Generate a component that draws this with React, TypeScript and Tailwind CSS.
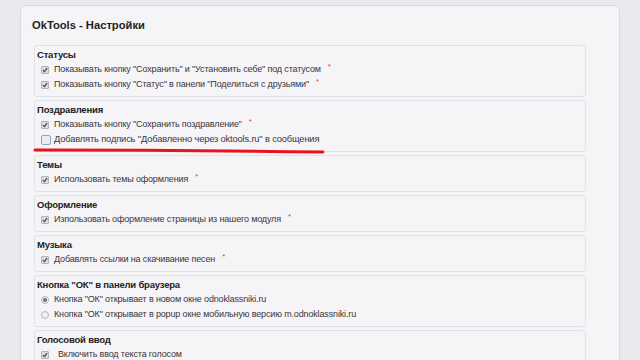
import React from "react";

type Item = { label: string; kind: "check" | "radio"; on: boolean; star?: boolean; big?: boolean; wide?: boolean };
type Section = { title: string; items: Item[] };

const sections: Section[] = [
  {
    title: "Статусы",
    items: [
      { label: 'Показывать кнопку "Сохранить" и "Установить себе" под статусом', kind: "check", on: true, star: true },
      { label: 'Показывать кнопку "Статус" в панели "Поделиться с друзьями"', kind: "check", on: true, star: true },
    ],
  },
  {
    title: "Поздравления",
    items: [
      { label: 'Показывать кнопку "Сохранить поздравление"', kind: "check", on: true, star: true },
      { label: 'Добавлять подпись "Добавленно через oktools.ru" в сообщения', kind: "check", on: false, big: true },
    ],
  },
  { title: "Темы", items: [{ label: "Использовать темы оформления", kind: "check", on: true, star: true }] },
  {
    title: "Оформление",
    items: [{ label: "Изпользовать оформление страницы из нашего модуля", kind: "check", on: true, star: true }],
  },
  { title: "Музыка", items: [{ label: "Добавлять ссылки на скачивание песен", kind: "check", on: true, star: true }] },
  {
    title: 'Кнопка "ОК" в панели браузера',
    items: [
      { label: 'Кнопка "ОК" открывает в новом окне odnoklassniki.ru', kind: "radio", on: true },
      { label: 'Кнопка "ОК" открывает в popup окне мобильную версию m.odnoklassniki.ru', kind: "radio", on: false },
    ],
  },
  { title: "Голосовой ввод", items: [{ label: "Включить ввод текста голосом", kind: "check", on: true, wide: true }] },
];

function Box({ it }: { it: Item }) {
  if (it.kind === "radio") {
    return (
      <span className="w-[8px] h-[8px] rounded-full border border-[#b8b8bc] bg-[#f0f0f2] flex items-center justify-center">
        {it.on ? <span className="w-[4px] h-[4px] rounded-full bg-[#707076]" /> : null}
      </span>
    );
  }
  if (!it.on) {
    return <span className="w-[10px] h-[10px] rounded-[2px] border border-[#8fa3c4] bg-[#e9edf4]" />;
  }
  return (
    <span className="w-[8px] h-[8px] rounded-[1px] border border-[#b4b4b8] bg-[#dcdce0] flex items-center justify-center">
      <svg width="6" height="6" viewBox="0 0 7 7">
        <path d="M1 3.6 L2.8 5.4 L6 1.2" stroke="#4a4a4e" strokeWidth="1.5" fill="none" />
      </svg>
    </span>
  );
}

export default function App() {
  return (
    <div
      className="relative w-[640px] h-[360px] overflow-hidden bg-[#e9e9ee] pt-[5px] pl-[20px]"
      style={{ fontFamily: '"Liberation Sans", Arial, sans-serif' }}
    >
      <div className="w-[600px] h-[400px] rounded-[5px] border border-[#d9d9e1] bg-[#f5f5f7]">
        <div className="pl-[11px] pt-[11px] h-[39px] text-[11.2px] font-bold text-[#1e1e22]">OkTools - Настройки</div>
        <div className="pl-[13px] flex flex-col gap-[3px] w-[565px]">
          {sections.map((s) => (
            <div key={s.title} className="rounded-[3px] border border-[#e1e1e7] pt-[1px] pb-[4px] pl-[2px]">
              <div className="h-[15px] leading-[15px] text-[9.5px] tracking-[-0.2px] font-bold text-[#222226]">
                {s.title}
              </div>
              {s.items.map((it) => (
                <div key={it.label} className="h-[15px] flex items-center pl-[4px]">
                  <span className="w-[13px] flex items-center">
                    <Box it={it} />
                  </span>
                  <span
                    className={`${it.wide ? "ml-[4px]" : ""} ${it.big ? "text-[9.3px]" : "text-[9px]"} tracking-[-0.15px] text-[#3a3440] whitespace-nowrap`}
                  >
                    {it.label}
                    {it.star ? <span className="ml-[7px] relative top-[-3px] text-[8px] text-[#f03a3a]">*</span> : null}
                  </span>
                </div>
              ))}
            </div>
          ))}
        </div>
      </div>
      <svg className="absolute left-0 top-0" width="640" height="360">
        <path d="M35 150 Q180 150 323 152" stroke="#e8141c" strokeWidth="3" fill="none" strokeLinecap="round" />
      </svg>
    </div>
  );
}
